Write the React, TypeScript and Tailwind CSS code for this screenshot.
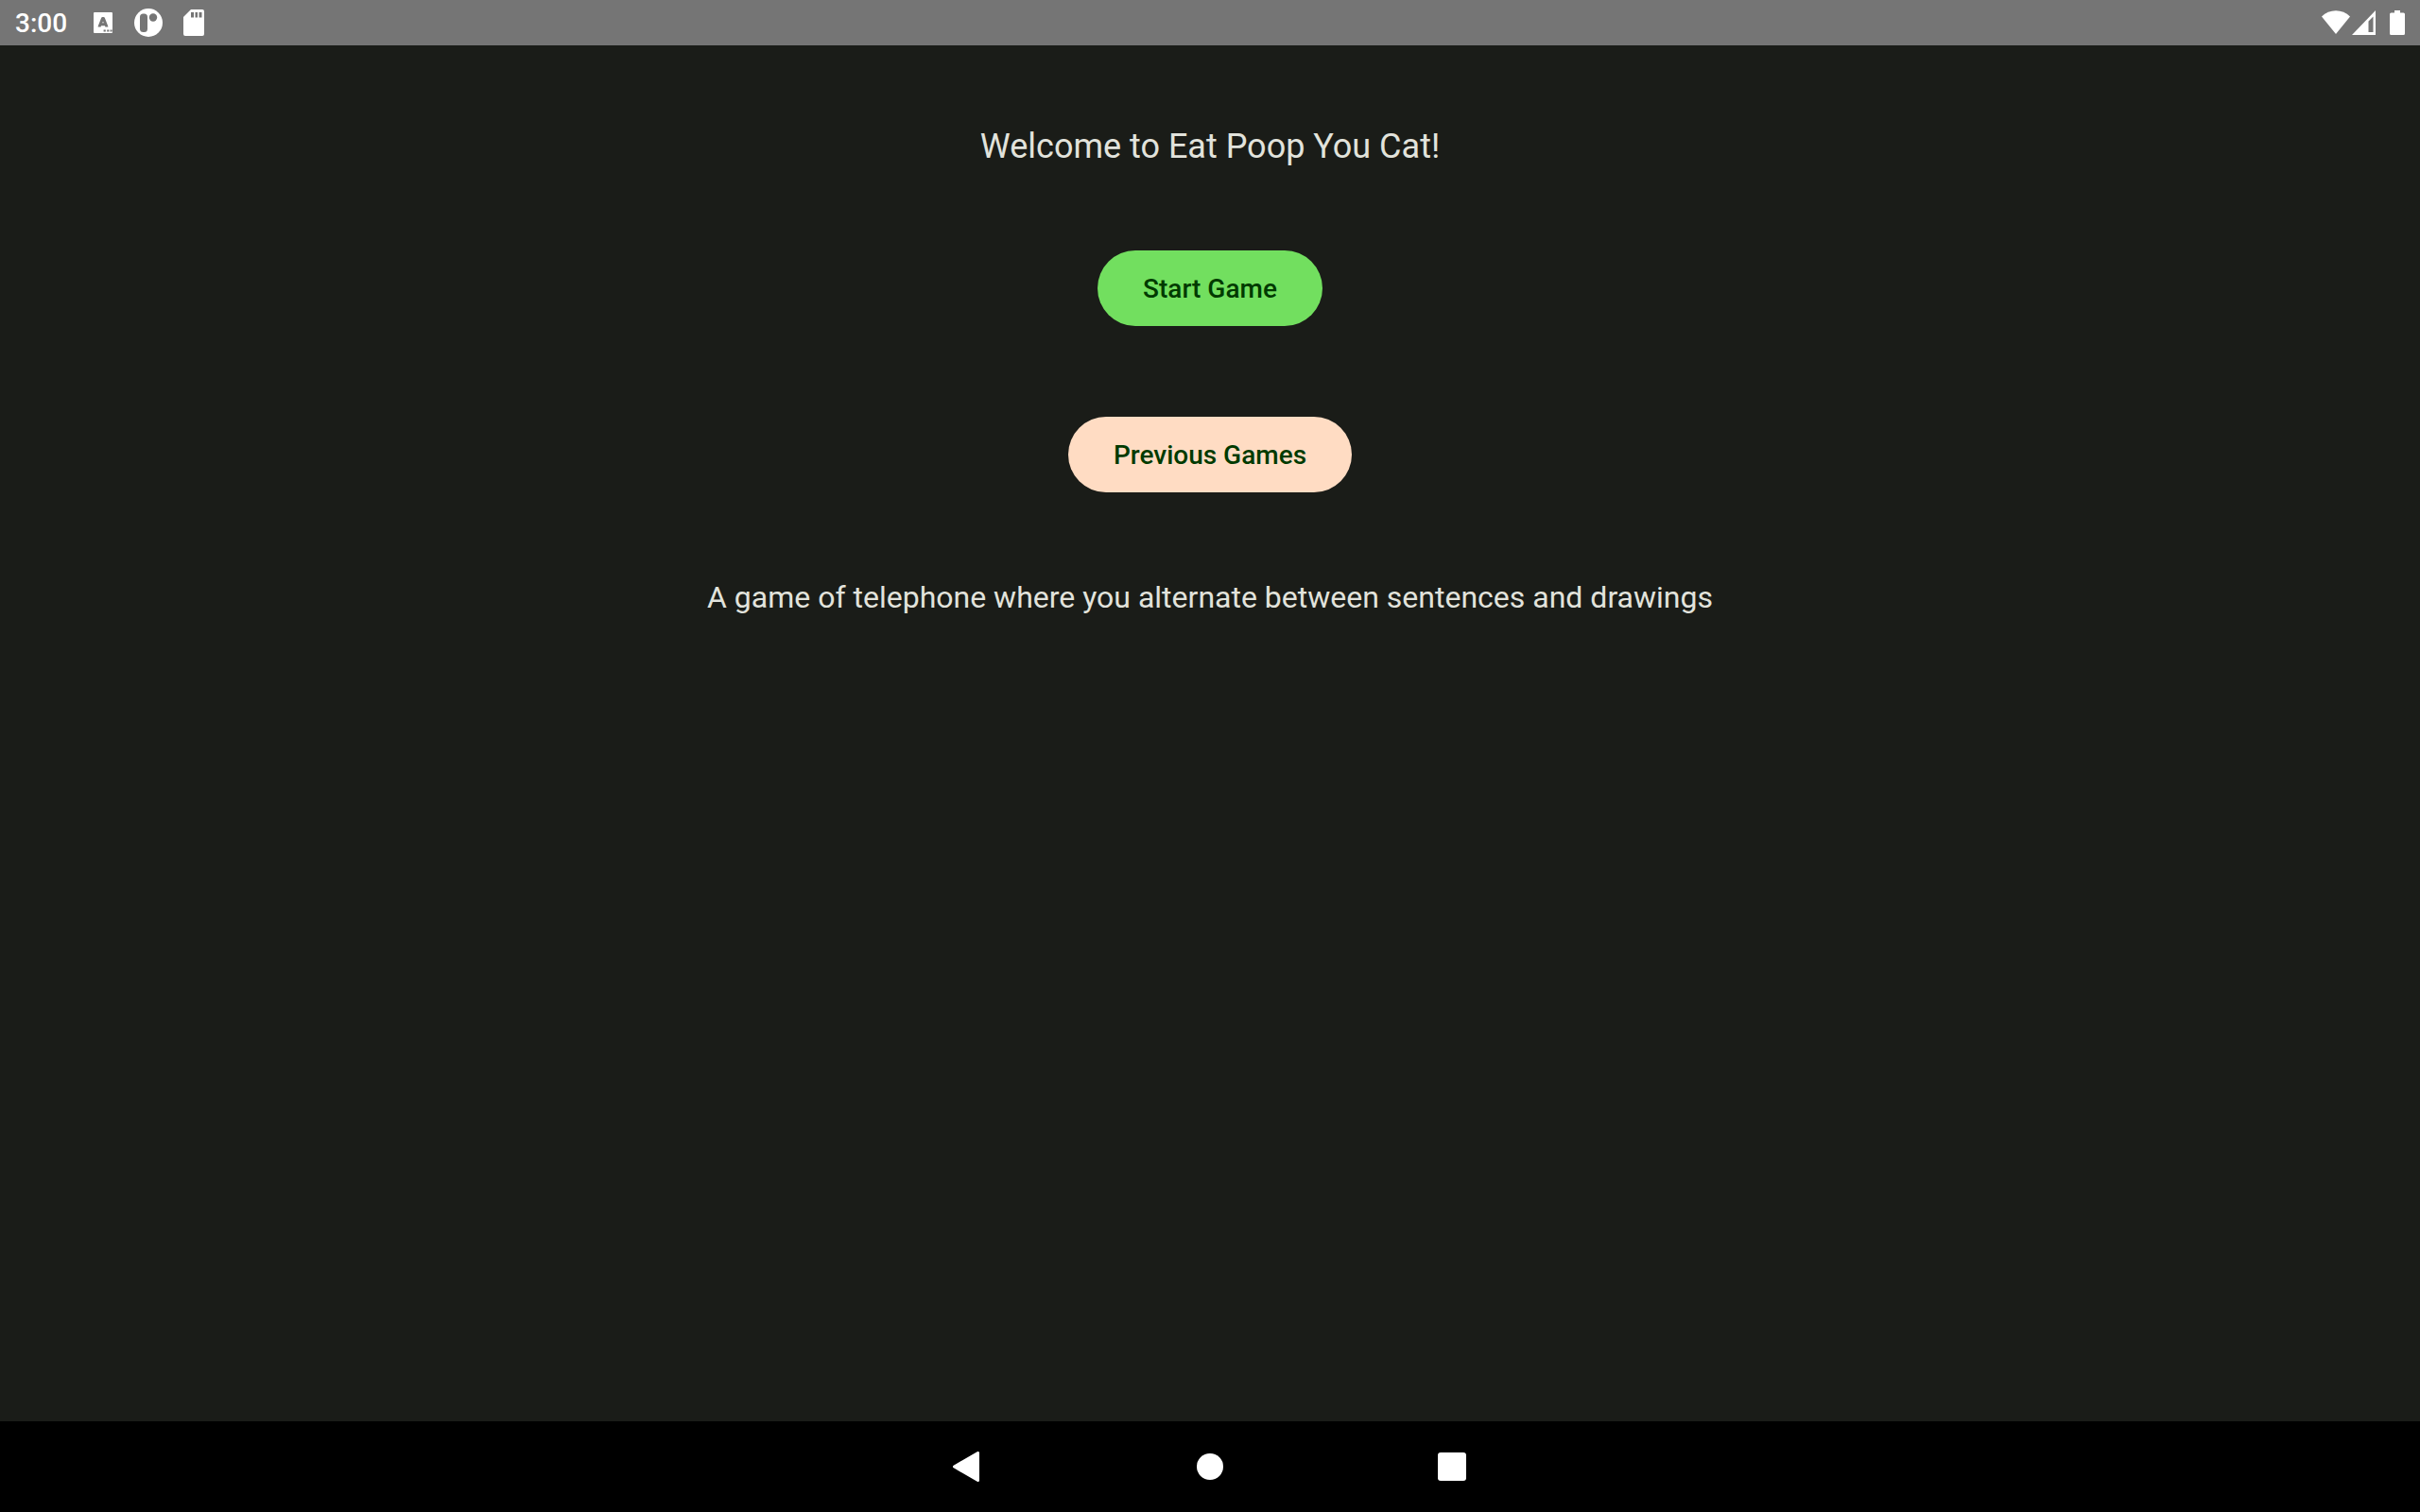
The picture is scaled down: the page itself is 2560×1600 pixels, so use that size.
import React from "react";

function NotificationIcons() {
  return (
    <div className="flex items-center" aria-hidden="true">
      <svg width="20" height="22" viewBox="0 0 20 22">
        <rect width="20" height="22" rx="1" fill="#fff" />
        <path d="M6.200 15.600V15L9.500 6.500H10.500L13.800 15V15.600M7.500 12.800h5" fill="none" stroke="#757575" strokeWidth="3" strokeLinejoin="round" />
        <path d="M10.600 19.600h2.200M14.200 19.600h2.200M17.600 19.600h2" stroke="#757575" strokeWidth="2" />
      </svg>
      <svg width="30" height="30" viewBox="0 0 30 30" className="ml-[23px]">
        <circle cx="15" cy="15" r="15" fill="#fff" />
        <rect x="6" y="5.5" width="8" height="19.5" rx="3.5" fill="#757575" />
        <circle cx="20" cy="9.5" r="4.2" fill="#757575" />
      </svg>
      <svg width="22" height="28" viewBox="0 0 22 28" className="ml-[22px]">
        <path
          fill="#fff"
          fillRule="evenodd"
          d="M8 0H20a2 2 0 0 1 2 2V26a2 2 0 0 1-2 2H2a2 2 0 0 1-2-2V8ZM8 3V8.500H11V3ZM12.500 3V8.500H15V3ZM16.500 3V8.500H19.500V3Z"
        />
      </svg>
    </div>
  );
}

function SystemIcons() {
  return (
    <div className="flex items-center" aria-hidden="true">
      <svg width="30" height="26" viewBox="0 0 30 26">
        <path d="M0 6.500C8-2 22-2 30 6.500L15 25Z" fill="#fff" />
      </svg>
      <svg width="25" height="26" viewBox="0 0 25 26" className="ml-[2px]">
        <path d="M25 0V26H0ZM22.500 6.500 17.500 11.500V23H22.500Z" fill="#fff" fillRule="evenodd" />
      </svg>
      <svg width="16" height="26" viewBox="0 0 16 26" className="ml-[15px]">
        <path d="M5 0H11V2.500H14.500A1.500 1.500 0 0 1 16 4V24.500A1.500 1.500 0 0 1 14.500 26H1.500A1.500 1.500 0 0 1 0 24.500V4A1.500 1.500 0 0 1 1.500 2.500H5Z" fill="#fff" />
      </svg>
    </div>
  );
}

function NavigationBar() {
  return (
    <nav className="flex h-24 items-center justify-center gap-24 bg-black text-white">
      <button type="button" aria-label="Back" className="flex h-24 w-40 items-center justify-center">
        <svg width="32" height="32" viewBox="0 0 32 32">
          <path d="M26.500 1.500V30.500L1.500 16Z" fill="currentColor" stroke="currentColor" strokeWidth="3" strokeLinejoin="round" />
        </svg>
      </button>
      <button type="button" aria-label="Home" className="flex h-24 w-40 items-center justify-center">
        <svg width="28" height="28" viewBox="0 0 28 28">
          <circle cx="14" cy="14" r="14" fill="currentColor" />
        </svg>
      </button>
      <button type="button" aria-label="Recent apps" className="flex h-24 w-40 items-center justify-center">
        <svg width="30" height="30" viewBox="0 0 30 30">
          <rect width="30" height="30" rx="3" fill="currentColor" />
        </svg>
      </button>
    </nav>
  );
}

export default function App() {
  return (
    <div className="flex min-h-screen flex-col bg-[#1a1c18] font-[Roboto,sans-serif] text-[#e2e3dc]">
      <header className="flex h-12 items-center justify-between bg-[#757575] px-4 text-white">
        <div className="flex items-center gap-7">
          <time className="pt-0.5 text-[28px] leading-8 font-medium">3:00</time>
          <NotificationIcons />
        </div>
        <SystemIcons />
      </header>
      <main className="flex flex-1 flex-col items-center px-8 pt-20 text-center">
        <h1 className="text-4xl leading-[54px] font-normal">Welcome to Eat Poop You Cat!</h1>
        <button type="button" className="mt-[83px] h-20 rounded-full bg-[#72df5f] px-12 pt-0.5 text-[28px] leading-10 font-medium text-[#003a00]">
          Start Game
        </button>
        <button type="button" className="mt-24 h-20 rounded-full bg-[#ffdcc3] px-12 pt-0.5 text-[28px] leading-10 font-medium text-[#003a00]">
          Previous Games
        </button>
        <p className="mt-[87px] text-[32px] leading-[48px]">
          A game of telephone where you alternate between sentences and drawings
        </p>
      </main>
      <NavigationBar />
    </div>
  );
}
